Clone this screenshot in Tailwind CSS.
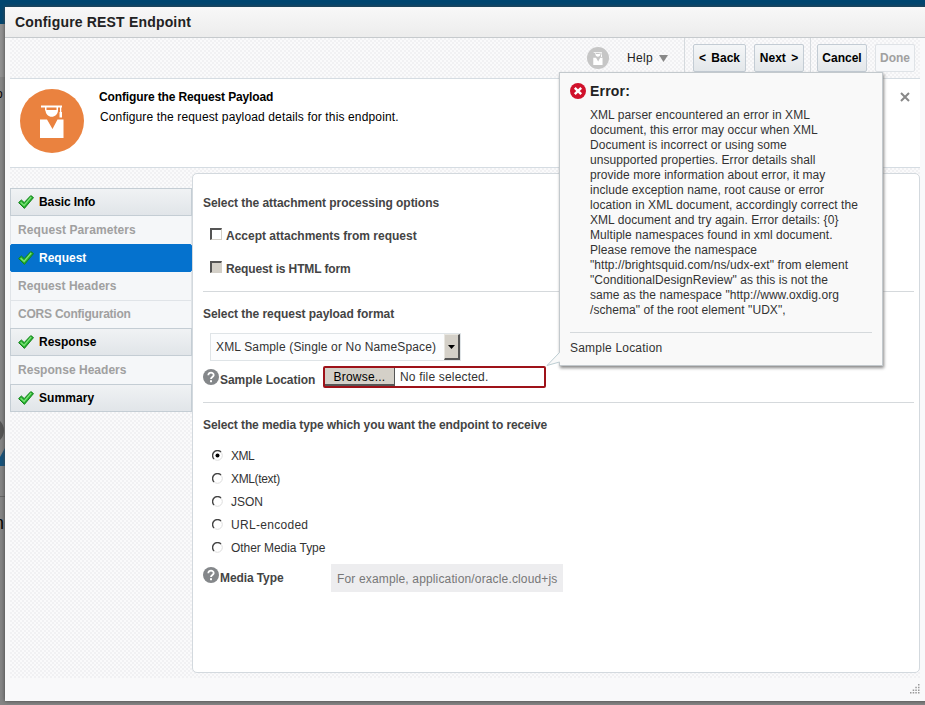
<!DOCTYPE html>
<html lang="en">
<head>
  <meta charset="UTF-8" />
  <meta name="viewport" content="width=device-width, initial-scale=1.0"/>
  <title>Configure REST Endpoint</title>
  <script src="https://cdn.jsdelivr.net/npm/@tailwindcss/browser@4"></script>
</head>
<body class="relative flex h-[705px] w-[925px] flex-col overflow-hidden bg-[#858585] font-['Liberation_Sans',Arial,sans-serif] text-[12px] leading-[15px] whitespace-nowrap text-[#333]">

  <svg class="hidden">
    <symbol id="check" viewBox="0 0 16 14">
      <path d="M.6 7.600 3.400 5l2.800 2.600L12.800.6l2.700 2L6.400 13.400z" fill="#27b32f" stroke="#14801c" stroke-width="1"/>
      <path d="M2.600 7.200l3.500 3.300L13.200 2" fill="none" stroke="#7fe37b" stroke-width="1.200"/>
    </symbol>
    <symbol id="help" viewBox="0 0 16 16">
      <circle cx="8" cy="8" r="8" fill="#84878a"/>
      <path d="M5.300 6.200C5.300 2.800 10.800 3 10.700 6.100 10.600 8 8 8 8 10" fill="none" stroke="#fff" stroke-width="1.800"/>
      <rect x="7" y="11.200" width="2" height="2" fill="#fff"/>
    </symbol>
    <symbol id="grad" viewBox="0 0 24 33">
      <path d="M1 .5h21v2H1zM5 2.500h1.500v3H5zM16.500 2.500H18v3h-1.500zM5.500 5h12.500c0 9-12.500 9-12.500 0zM20 2.500h1.300v5H20zM19.500 7h2.500v5.500h-2.500zM0 14.500h7L12.500 24l5-9.500H23.500V33H0z" fill="#fff"/>
    </symbol>
  </svg>

  <!-- dimmed page behind the dialog -->
  <div class="absolute top-0 left-0 h-[24px] w-full bg-[#004670]"></div>
  <div class="absolute top-[24px] left-0 h-[53px] w-[5px] bg-[#929292]"></div>
  <div class="absolute top-[87px] -left-[4px] text-[12px] text-black">o</div>
  <div class="absolute top-[417px] -left-[23px] size-[27px] rounded-full border-[4px] border-[#555]"></div>
  <div class="absolute top-[448px] left-0 h-[18px] w-[5px] bg-[#14527c] [clip-path:polygon(100%_0,100%_100%,0_100%,0_50%)]"></div>
  <div class="absolute top-[496px] left-0 h-px w-[5px] bg-[#666]"></div>
  <div class="absolute top-[516px] -left-[6px] text-[18px] text-black">n</div>

  <!-- dialog -->
  <div class="relative mt-[7px] ml-[5px] flex h-[694px] w-[930px] flex-col bg-[#f9f9fa] shadow-[0_0_4px_#444]">
    <header class="flex h-[31px] items-center border-b border-[#c6cacd] bg-linear-to-b from-[#f8f8f8] to-[#ececec] pl-[10px]">
      <h1 class="pt-px text-[14px] font-bold tracking-[0.18px] text-[#222]">Configure REST Endpoint</h1>
    </header>

    <div class="ml-[5px] flex h-[640px] w-[910px] flex-col bg-[#f8f8f9] bg-[conic-gradient(#f1f1f3_25%,#fafafb_0_50%,#f1f1f3_0_75%,#fafafb_0)] bg-size-[4px_4px]">
      <!-- toolbar -->
      <div class="flex h-[41px] items-center border-b border-[#d5dce2]">
        <div class="ml-[577px] flex size-[22px] items-center justify-center rounded-full bg-[#c6c6c6]">
          <svg class="h-[13px] w-[10px]"><use href="#grad"/></svg>
        </div>
        <span class="ml-[18px] w-[27px] tracking-[0.3px] text-[#222]">Help</span>
        <svg class="ml-[5px] h-[7px] w-[9px]" viewBox="0 0 9 7"><path d="M0 0h9L4.500 7z" fill="#888"/></svg>
        <div class="ml-[16px] h-full w-px bg-[#d5dade]"></div>
        <button class="ml-[8px] h-[28px] w-[53px] rounded-[2px] border border-[#c3ccd4] bg-linear-to-b from-[#f4f6f7] to-[#e3e7ea] pt-px font-bold [word-spacing:2px] text-black">&lt; Back</button>
        <button class="ml-[8px] h-[28px] w-[50px] rounded-[2px] border border-[#c3ccd4] bg-linear-to-b from-[#f4f6f7] to-[#e3e7ea] pt-px font-bold [word-spacing:2px] text-black">Next &gt;</button>
        <div class="ml-[6px] h-full w-px bg-[#d5dade]"></div>
        <button class="ml-[6px] h-[28px] w-[50px] rounded-[2px] border border-[#c3ccd4] bg-linear-to-b from-[#f4f6f7] to-[#e3e7ea] pt-px font-bold text-black">Cancel</button>
        <button class="ml-[8px] h-[28px] w-[40px] rounded-[2px] border border-[#dfe3e7] bg-[#f7f8fa] pt-px font-bold text-[#a0a0a0]">Done</button>
      </div>

      <!-- step description -->
      <div class="flex h-[89px] border-b border-[#d5dce2] bg-white pt-[10px] pl-[10px]">
        <div class="flex size-[64px] items-center justify-center rounded-full bg-[#ea823f]">
          <svg class="h-[33px] w-[24px]"><use href="#grad"/></svg>
        </div>
        <div class="ml-[15px] flex-1 text-black">
          <h2 class="leading-[17px] font-bold tracking-[-0.13px]">Configure the Request Payload</h2>
          <p class="pt-[2px] pl-px leading-[19px] tracking-[0.14px]">Configure the request payload details for this endpoint.</p>
        </div>
        <svg class="mt-[3px] mr-[10px] size-[10px]" viewBox="0 0 10 10"><path d="M1 1l8 8M9 1l-8 8" stroke="#888" stroke-width="2"/></svg>
      </div>

      <div class="flex flex-1">
        <!-- steps -->
        <nav class="mt-[20px] flex w-[182px] flex-col font-bold">
          <a class="flex h-[28px] items-center gap-[5px] border border-[#c4cdd4] bg-linear-to-b from-[#f0f2f4] to-[#e1e5e9] pl-[7px] tracking-[-0.1px] text-black"><svg class="h-[14px] w-[16px]"><use href="#check"/></svg>Basic Info</a>
          <a class="flex h-[28px] items-center border-x border-[#e0e4e8] bg-[#f5f7f9] pl-[7px] tracking-[0.1px] text-[#a0a0a0]">Request Parameters</a>
          <a class="flex h-[28px] items-center gap-[5px] rounded-[2px] border border-[#0572ce] bg-[#0572ce] pl-[7px] text-white"><svg class="h-[14px] w-[16px]"><use href="#check"/></svg>Request</a>
          <a class="flex h-[28px] items-center border-x border-[#e0e4e8] bg-[#f5f7f9] pl-[7px] tracking-[0.03px] text-[#a0a0a0]">Request Headers</a>
          <a class="flex h-[28px] items-center border-x border-t border-[#e0e4e8] bg-[#f5f7f9] pl-[7px] tracking-[-0.22px] text-[#a0a0a0]">CORS Configuration</a>
          <a class="flex h-[28px] items-center gap-[5px] border border-[#c4cdd4] bg-linear-to-b from-[#f0f2f4] to-[#e1e5e9] pl-[7px] text-black"><svg class="h-[14px] w-[16px]"><use href="#check"/></svg>Response</a>
          <a class="flex h-[28px] items-center border-x border-[#e0e4e8] bg-[#f5f7f9] pl-[7px] tracking-[0.03px] text-[#a0a0a0]">Response Headers</a>
          <a class="flex h-[28px] items-center gap-[5px] border border-[#c4cdd4] bg-linear-to-b from-[#f0f2f4] to-[#e1e5e9] pl-[7px] tracking-[0.1px] text-black"><svg class="h-[14px] w-[16px]"><use href="#check"/></svg>Summary</a>
        </nav>

        <!-- form -->
        <main class="mt-[5px] flex h-[500px] w-[728px] flex-col rounded-[5px] border border-[#d3d9de] bg-white pt-[22px] pr-[5px] pl-[10px]">
          <section class="h-[96px] border-b border-[#d5d9dc] font-bold text-[#444]">
            <h3 class="tracking-[-0.05px]">Select the attachment processing options</h3>
            <label class="mt-[17px] flex h-[15px] pl-[7px]">
              <span class="size-[12px] border border-t-2 border-l-2 border-[#d4d0c8] border-t-[#555] border-l-[#555] bg-white"></span>
              <span class="pt-[1px] pl-[4px]">Accept attachments from request</span>
            </label>
            <label class="mt-[18px] flex h-[15px] pl-[7px]">
              <span class="size-[12px] border border-t-2 border-l-2 border-[#d4d0c8] border-t-[#555] border-l-[#555] bg-[#d4d0c8]"></span>
              <span class="pt-[1px] pl-[4px] tracking-[-0.13px]">Request is HTML form</span>
            </label>
          </section>

          <section class="h-[111px] border-b border-[#d5d9dc] pt-[15px]">
            <h3 class="font-bold tracking-[-0.05px] text-[#444]">Select the request payload format</h3>
            <div class="mt-[11px] ml-[7px] flex h-[28px] w-[251px] items-center border border-[#dfe4e7] bg-[#fcfdfe] pl-[5px]">
              <span class="flex-1 tracking-[0.15px]">XML Sample (Single or No NameSpace)</span>
              <span class="flex h-[26px] w-[16px] items-center justify-center border border-r-2 border-b-2 border-[#e8e6e0] border-r-[#555] border-b-[#555] bg-[#d4d0c8]">
                <svg class="h-[4px] w-[7px]" viewBox="0 0 7 4"><path d="M0 0h7L3.500 4z"/></svg>
              </span>
            </div>
            <div class="mt-[5px] flex h-[22px]">
              <svg class="mt-[3px] size-[16px]"><use href="#help"/></svg>
              <span class="w-[104px] pt-[7px] pl-[1px] font-bold tracking-[-0.05px] text-[#444]">Sample Location</span>
              <div class="flex h-[22px] w-[223px] items-center rounded-[2px] border-2 border-[#9e1219] bg-white">
                <span class="flex h-full w-[70px] items-center justify-center border-r border-b-2 border-[#555] bg-[#d4d0c8] pt-[3px] tracking-[0.2px] text-black">Browse...</span>
                <span class="pt-px pl-[5px] tracking-[0.18px]">No file selected.</span>
              </div>
            </div>
          </section>

          <section class="pt-[15px]">
            <h3 class="font-bold tracking-[-0.1px] text-[#444]">Select the media type which you want the endpoint to receive</h3>
            <div class="mt-[11px] flex flex-col pl-[9px]">
              <label class="flex h-[23px] items-center"><svg class="mr-[8px] size-[11px]" viewBox="0 0 11 11"><circle cx="5.500" cy="5.500" r="4.800" fill="#fff" stroke="#ddd"/><path d="M2 9A4.800 4.800 0 0 1 9 2" fill="none" stroke="#444" stroke-width="1.400"/><circle cx="5.500" cy="5.500" r="2" fill="#000"/></svg><span class="pt-px tracking-[-0.5px]">XML</span></label>
              <label class="flex h-[23px] items-center"><svg class="mr-[8px] size-[11px]" viewBox="0 0 11 11"><circle cx="5.500" cy="5.500" r="4.800" fill="#fff" stroke="#ddd"/><path d="M2 9A4.800 4.800 0 0 1 9 2" fill="none" stroke="#444" stroke-width="1.400"/></svg><span class="pt-px tracking-[-0.35px]">XML(text)</span></label>
              <label class="flex h-[23px] items-center"><svg class="mr-[8px] size-[11px]" viewBox="0 0 11 11"><circle cx="5.500" cy="5.500" r="4.800" fill="#fff" stroke="#ddd"/><path d="M2 9A4.800 4.800 0 0 1 9 2" fill="none" stroke="#444" stroke-width="1.400"/></svg><span class="pt-px">JSON</span></label>
              <label class="flex h-[23px] items-center"><svg class="mr-[8px] size-[11px]" viewBox="0 0 11 11"><circle cx="5.500" cy="5.500" r="4.800" fill="#fff" stroke="#ddd"/><path d="M2 9A4.800 4.800 0 0 1 9 2" fill="none" stroke="#444" stroke-width="1.400"/></svg><span class="pt-px tracking-[0.3px]">URL-encoded</span></label>
              <label class="flex h-[23px] items-center"><svg class="mr-[8px] size-[11px]" viewBox="0 0 11 11"><circle cx="5.500" cy="5.500" r="4.800" fill="#fff" stroke="#ddd"/><path d="M2 9A4.800 4.800 0 0 1 9 2" fill="none" stroke="#444" stroke-width="1.400"/></svg><span class="pt-px tracking-[-0.05px]">Other Media Type</span></label>
            </div>
            <div class="mt-[5px] flex h-[28px]">
              <svg class="mt-[3px] size-[16px]"><use href="#help"/></svg>
              <span class="w-[112px] pt-[7px] pl-[1px] font-bold tracking-[-0.1px] text-[#444]">Media Type</span>
              <div class="flex h-[28px] w-[232px] items-center bg-[#ededef] pt-[2px] pl-[6px] tracking-[0.15px] text-[#777]">For example, application/oracle.cloud+js</div>
            </div>
          </section>
        </main>
      </div>
    </div>

    <!-- resize grip -->
    <svg class="absolute top-[677px] left-[905px] h-[10px] w-[10px]" viewBox="0 0 10 10" fill="#999">
      <path d="M8 0h1.500v1.500H8zM8 2.700h1.500v1.500H8zM5.300 2.700h1.500v1.500H5.300zM8 5.400h1.500v1.500H8zM5.300 5.400h1.500v1.500H5.300zM2.700 5.400h1.500v1.500H2.700zM8 8h1.500v1.500H8zM5.300 8h1.500v1.500H5.300zM2.700 8h1.500v1.500H2.700zM0 8h1.500v1.500H0z"/>
    </svg>
  </div>

  <!-- error popup -->
  <div class="absolute top-[72px] left-[559px] h-[294px] w-[324px] border border-[#c3c9cd] bg-[#f9f9f9] px-[10px] pt-[10px] shadow-[1px_2px_3px_#888]">
    <div class="flex h-[16px] items-center gap-[4px]">
      <svg class="size-[16px]" viewBox="0 0 16 16"><circle cx="8" cy="8" r="8" fill="#d0112b"/><path d="M4.800 4.800l6.400 6.400M11.200 4.800l-6.400 6.400" stroke="#fff" stroke-width="2.400"/></svg>
      <h2 class="text-[14px] font-bold tracking-[0.2px] text-[#222]">Error:</h2>
    </div>
    <p class="mt-[9px] h-[224px] pl-[20px] tracking-[0.06px]">XML parser encountered an error in XML<br>document, this error may occur when XML<br>Document is incorrect or using some<br>unsupported properties. Error details shall<br>provide more information about error, it may<br>include exception name, root cause or error<br>location in XML document, accordingly correct the<br>XML document and try again. Error details: {0}<br>Multiple namespaces found in xml document.<br>Please remove the namespace<br>"http://brightsquid.com/ns/udx-ext" from element<br>"ConditionalDesignReview" as this is not the<br>same as the namespace "http://www.oxdig.org<br>/schema" of the root element "UDX",</p>
    <div class="border-t border-[#d5d9dc] pt-[8px] tracking-[0.2px]">Sample Location</div>
  </div>
  <svg class="absolute top-[351px] left-[546px] h-[16px] w-[15px]" viewBox="0 0 15 16">
    <path d="M15 1 13 2 1 14.500 14 11h1z" fill="#f9f9f9"/>
    <path d="M13.500 1.500 1 14.500 13.500 11" fill="none" stroke="#bccdd2"/>
  </svg>
</body>
</html>
